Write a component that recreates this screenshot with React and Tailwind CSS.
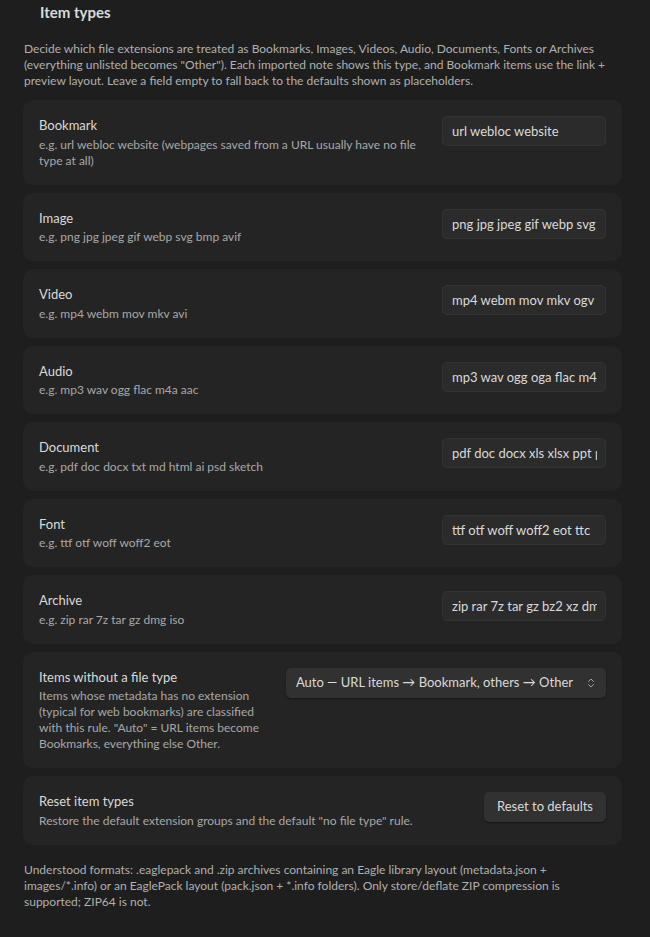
import { ChevronsUpDown } from "lucide-react";

const TYPES = [
  {
    name: "Bookmark",
    hint: "e.g. url webloc website (webpages saved from a URL usually have no file type at all)",
    value: "url webloc website",
  },
  { name: "Image", hint: "e.g. png jpg jpeg gif webp svg bmp avif", value: "png jpg jpeg gif webp svg bmp avif" },
  { name: "Video", hint: "e.g. mp4 webm mov mkv avi", value: "mp4 webm mov mkv ogv avi" },
  { name: "Audio", hint: "e.g. mp3 wav ogg flac m4a aac", value: "mp3 wav ogg oga flac m4a aac" },
  {
    name: "Document",
    hint: "e.g. pdf doc docx txt md html ai psd sketch",
    value: "pdf doc docx xls xlsx ppt pptx txt md html ai psd sketch",
  },
  { name: "Font", hint: "e.g. ttf otf woff woff2 eot", value: "ttf otf woff woff2 eot ttc" },
  { name: "Archive", hint: "e.g. zip rar 7z tar gz dmg iso", value: "zip rar 7z tar gz bz2 xz dmg iso" },
];

function SettingCard({ name, children, control }) {
  return (
    <div className="flex items-start gap-4 rounded-[10px] bg-[#242424] px-4 py-4">
      <div className="min-w-0 flex-1">
        <div className="text-[13px] leading-[18.5px] text-[#dadada]">{name}</div>
        <div className="mt-[2px] text-[12px] leading-4 text-[#a8a8a8]">{children}</div>
      </div>
      {control}
    </div>
  );
}

export default function App() {
  return (
    <main className="min-h-screen bg-[#1e1e1e] pl-[23px] pr-[28px] pt-[2px] pb-10 font-['Lato',sans-serif]">
      <h2 className="pl-[17px] text-[15px] font-bold leading-5 text-[#dadada]">Item types</h2>

      <p className="mt-[19px] pl-px text-[12px] leading-4 text-[#b0b0b0]">
        Decide which file extensions are treated as Bookmarks, Images, Videos, Audio, Documents, Fonts or Archives
        (everything unlisted becomes "Other"). Each imported note shows this type, and Bookmark items use the link +
        preview layout. Leave a field empty to fall back to the defaults shown as placeholders.
      </p>

      <div className="mt-[11px] flex flex-col gap-2">
        {TYPES.map((t) => (
          <SettingCard
            key={t.name}
            name={t.name}
            control={
              <input
                type="text"
                readOnly
                value={t.value}
                className="h-[30px] w-[164px] shrink-0 rounded-[5px] border border-[#333] bg-[#2b2b2b] pl-[9px] pr-2 text-[13px] text-[#dadada] outline-none"
              />
            }
          >
            {t.hint}
          </SettingCard>
        ))}

        <SettingCard
          name="Items without a file type"
          control={
            <div className="flex h-[30px] shrink-0 items-center gap-3 rounded-[5px] bg-[#313131] pl-[10px] pr-[9px] text-[13px] text-[#dadada] shadow-[0_1px_2px_rgba(0,0,0,0.35)]">
              <span>Auto — URL items → Bookmark, others → Other</span>
              <ChevronsUpDown size={12} strokeWidth={2} className="text-[#a0a0a0]" />
            </div>
          }
        >
          Items whose metadata has no extension (typical for web bookmarks) are classified with this rule. "Auto" =
          URL items become Bookmarks, everything else Other.
        </SettingCard>

        <SettingCard
          name="Reset item types"
          control={
            <button className="h-[30px] shrink-0 rounded-[5px] bg-[#313131] px-[13px] text-[13px] text-[#dadada] shadow-[0_1px_2px_rgba(0,0,0,0.4)]">
              Reset to defaults
            </button>
          }
        >
          Restore the default extension groups and the default "no file type" rule.
        </SettingCard>
      </div>

      <p className="mt-[17px] mr-[32px] pl-px text-[12px] leading-4 text-[#b0b0b0]">
        Understood formats: .eaglepack and .zip archives containing an Eagle library layout (metadata.json +
        images/*.info) or an EaglePack layout (pack.json + *.info folders). Only store/deflate ZIP compression is
        supported; ZIP64 is not.
      </p>
    </main>
  );
}
